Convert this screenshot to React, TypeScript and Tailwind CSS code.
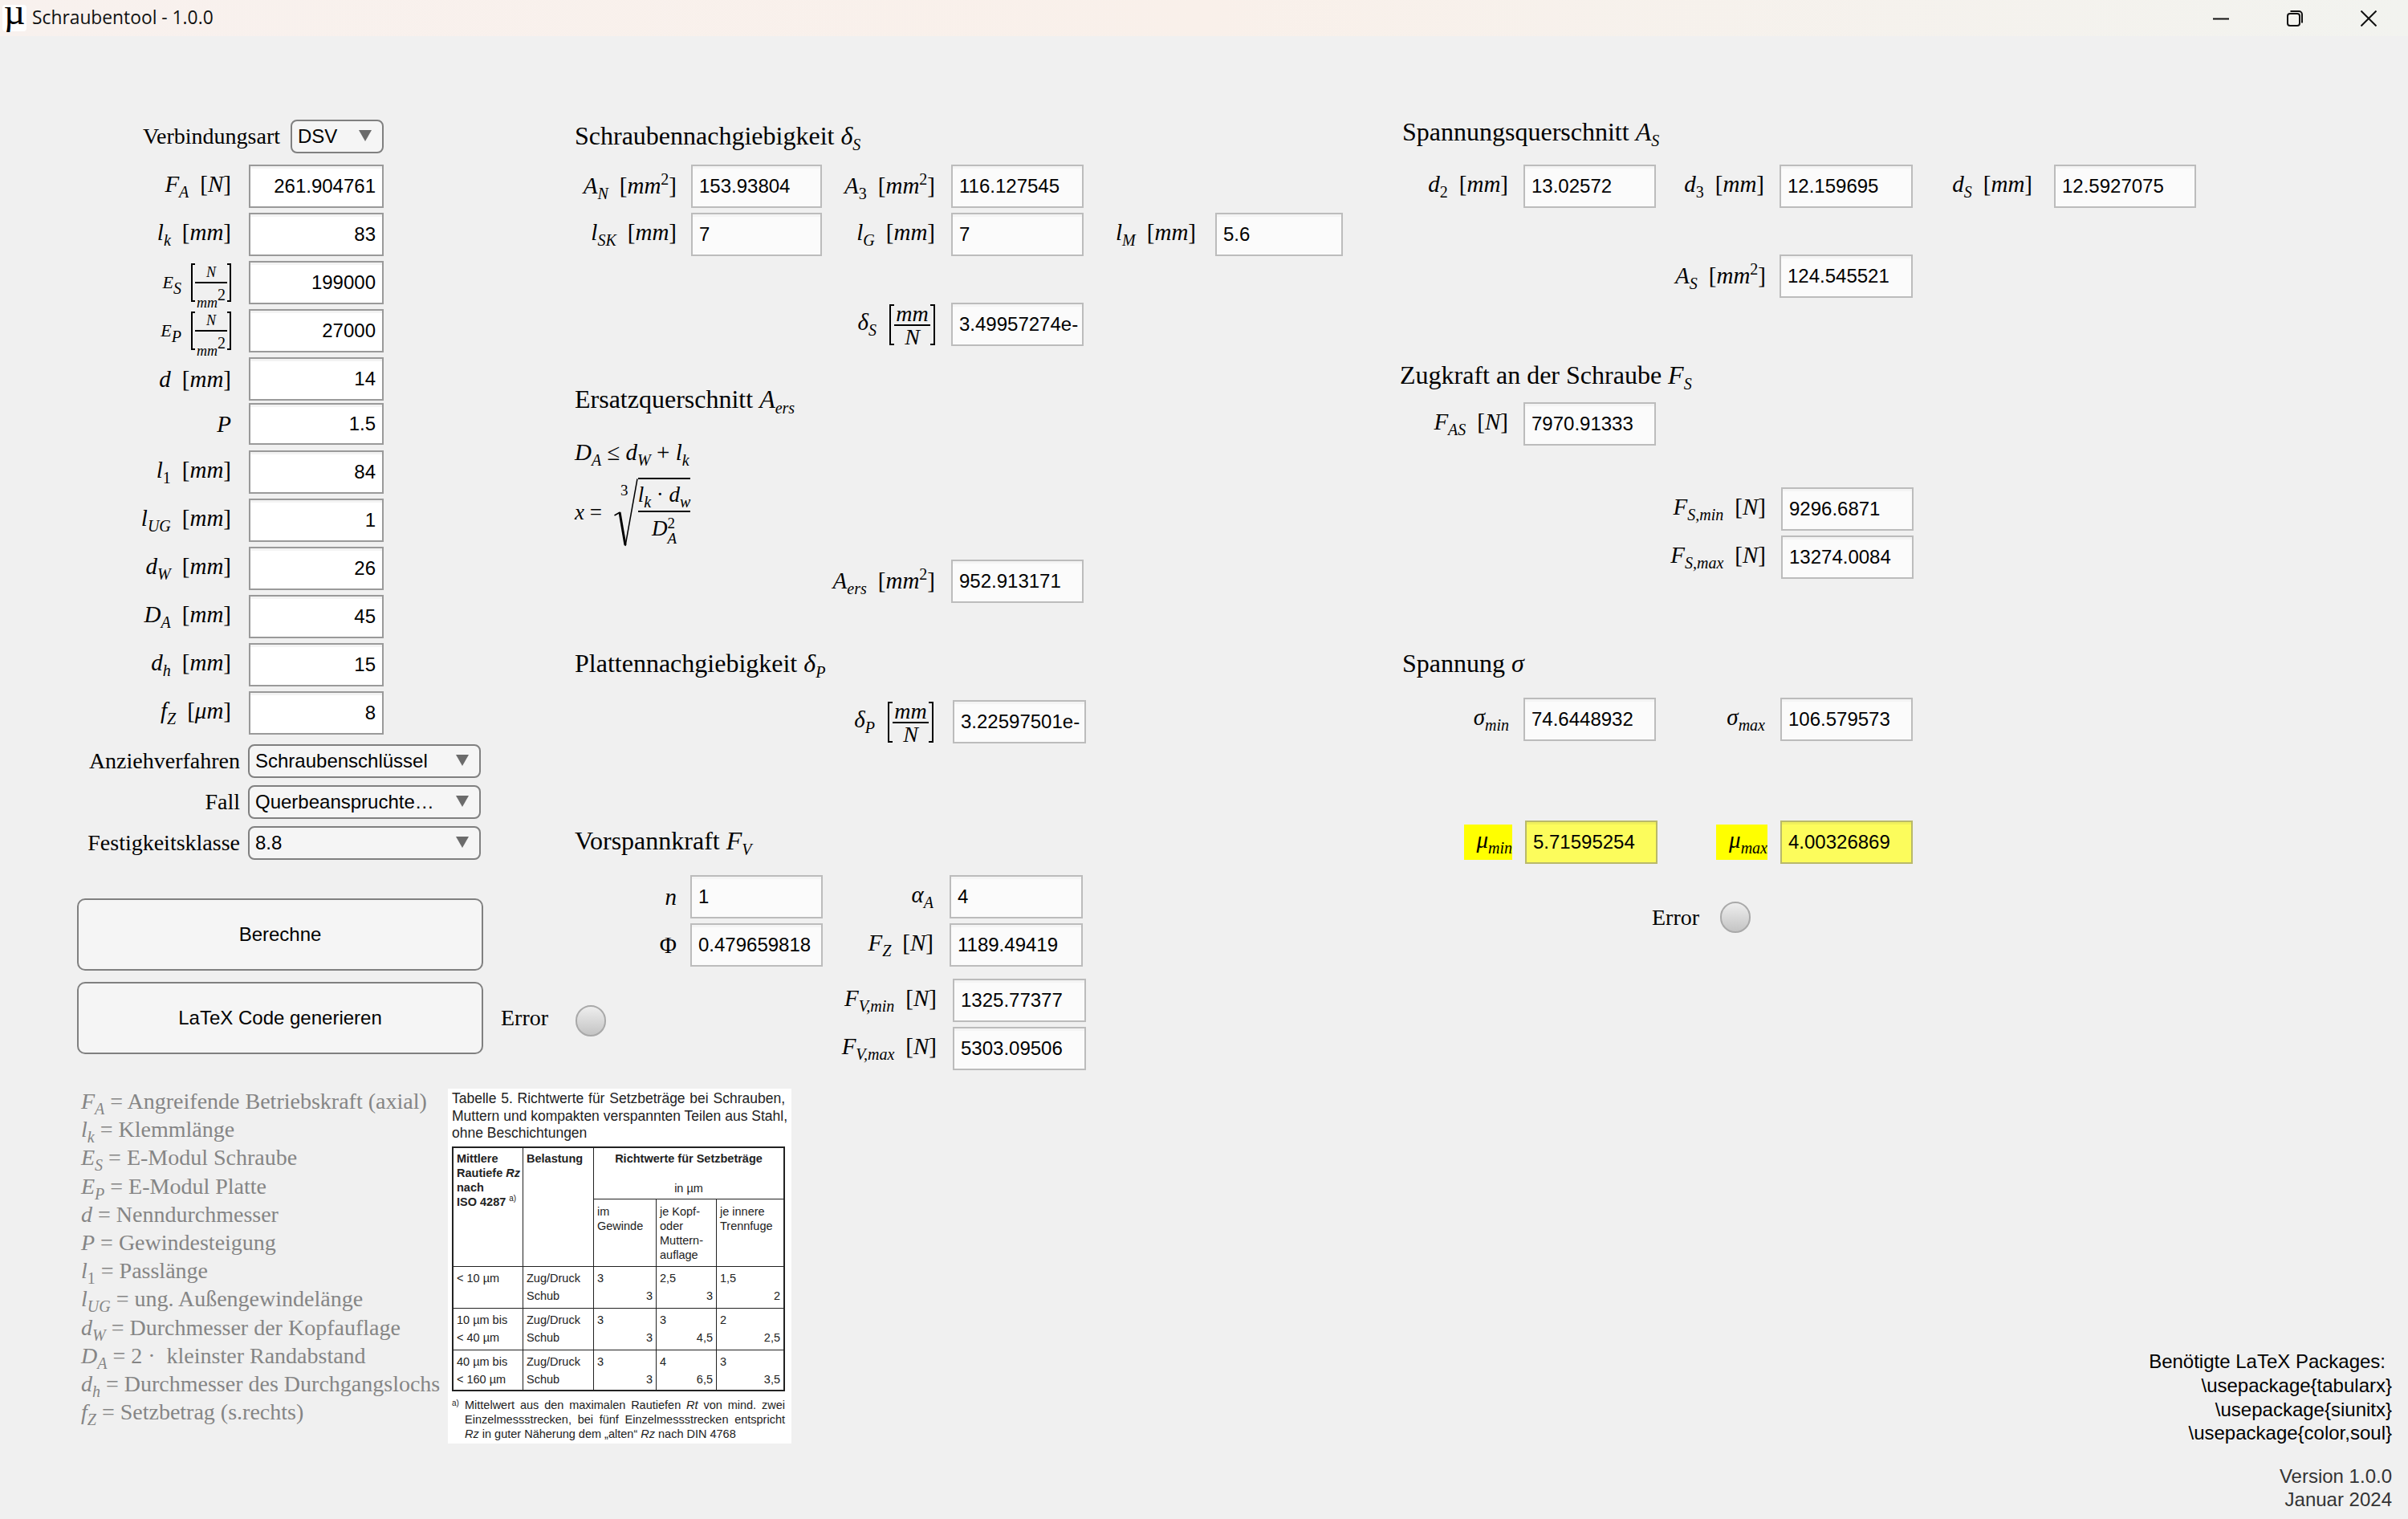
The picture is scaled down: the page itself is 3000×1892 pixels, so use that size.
import type { ReactNode } from "react"

function Sub({ children }: { children: ReactNode }) {
  return <span className="text-[20px] leading-none align-[-7px]">{children}</span>
}

function Sq() {
  return <span className="text-[20px] leading-none align-[11px] not-italic">2</span>
}

function Unit({ children }: { children: ReactNode }) {
  return (
    <span className="ml-[14px] not-italic">
      [<i>{children}</i>]
    </span>
  )
}

function Lab({ className, children }: { className: string; children: ReactNode }) {
  return (
    <div className={"flex items-center justify-end shrink-0 whitespace-pre italic leading-none text-[29px] " + className}>
      <span>{children}</span>
    </div>
  )
}

function Field({ className, value, right, short, tone = "out" }: { className: string; value: string; right?: boolean; short?: boolean; tone?: "in" | "out" | "yellow" }) {
  const look =
    tone === "in"
      ? "border-[#9a9a9a] bg-white shadow-[inset_0_3px_0_#f3f3f3]"
      : tone === "yellow"
        ? "border-[#b9b96a] bg-[#fcfc5c] shadow-[inset_0_3px_0_#f0f05c]"
        : "border-[#bcbcbc] bg-[#fbfbfb] shadow-[inset_0_3px_0_#f4f4f4]"
  return (
    <div className={"flex items-center shrink-0 border-2 overflow-hidden whitespace-nowrap font-['Liberation_Sans',sans-serif] text-[24px] " + (short ? "h-[52px] " : "h-[54px] ") + (right ? "justify-end pr-[8px] " : "pl-[8px] ") + look + " " + className}>
      {value}
    </div>
  )
}

function Select({ className, value }: { className: string; value: string }) {
  return (
    <div className={"flex items-center justify-between shrink-0 h-[42px] rounded-[8px] border-2 border-[#808080] bg-[#f5f5f5] pl-[7px] pr-[13px] font-['Liberation_Sans',sans-serif] text-[24px] " + className}>
      <span>{value}</span>
      <svg width="16" height="14" viewBox="0 0 16 14" className="shrink-0 mb-[3px]">
        <polygon points="0,0 16,0 8,14" fill="#6b6b6b" />
      </svg>
    </div>
  )
}

function Heading({ className = "", children }: { className?: string; children: ReactNode }) {
  return <div className={"h-[40px] leading-[40px] text-[32px] whitespace-pre " + className}>{children}</div>
}

// [ N / mm² ] unit used next to the moduli in the left column
function SmallFrac() {
  return (
    <span className="inline-flex items-stretch not-italic align-middle ml-[12px] h-[48px]">
      <span className="w-[5px] border-l-2 border-y-2 border-black" />
      <span className="flex flex-col items-center w-[40px] text-[18px] italic">
        <span className="h-[23px] leading-[23px]">N</span>
        <span className="w-full h-[2px] bg-black" />
        <span className="h-[23px] leading-[28px] whitespace-pre">mm<span className="not-italic text-[20px] align-[9px]">2</span></span>
      </span>
      <span className="w-[5px] border-r-2 border-y-2 border-black" />
    </span>
  )
}

function BigFrac() {
  return (
    <span className="inline-flex items-stretch not-italic align-middle ml-[16px] h-[51px]">
      <span className="w-[6px] border-l-2 border-y-2 border-black" />
      <span className="flex flex-col items-center w-[45px] italic text-[28px]">
        <span className="h-[25px] leading-[24px]">mm</span>
        <span className="w-full h-[2px] bg-black" />
        <span className="h-[24px] leading-[28px]">N</span>
      </span>
      <span className="w-[6px] border-r-2 border-y-2 border-black" />
    </span>
  )
}

function Lamp({ className = "" }: { className?: string }) {
  return <div className={"w-[38px] h-[39px] shrink-0 rounded-full border-2 border-[#a9a9a9] bg-gradient-to-b from-[#eeeeee] to-[#c4c4c4] " + className} />
}

function WideButton({ className = "", children }: { className?: string; children: ReactNode }) {
  return (
    <div className={"flex items-center justify-center shrink-0 w-[506px] h-[90px] rounded-[10px] border-2 border-[#808080] bg-[#f5f5f5] font-['Liberation_Sans',sans-serif] text-[24px] " + className}>
      {children}
    </div>
  )
}

function TitleBar() {
  return (
    <div className="flex items-center shrink-0 h-[45px] bg-gradient-to-r from-[#f8f1ee] via-[#f9f0ea] to-[#f2f3ef]">
      <div className="flex items-center justify-center w-[30px] h-[33px] ml-[3px] pb-[16px] rounded-[4px] bg-white font-['Liberation_Serif',serif] text-[46px] leading-none">
        µ
      </div>
      <span className="ml-[7px] font-['Open_Sans',sans-serif] text-[22.8px] text-[#111]">Schraubentool - 1.0.0</span>
      <div className="flex items-center ml-auto pr-[3px]">
        <div className="flex items-center justify-center w-[92px] h-[45px]">
          <svg width="20" height="20" viewBox="0 0 20 20" stroke="#111" strokeWidth="2" fill="none"><path d="M0 10.5h20" /></svg>
        </div>
        <div className="flex items-center justify-center w-[92px] h-[45px]">
          <svg width="20" height="20" viewBox="0 0 20 20" stroke="#111" strokeWidth="2" fill="none"><rect x="1" y="4" width="15" height="15" rx="3" /><path d="M4.5 1H15a4 4 0 0 1 4 4v10.5" /></svg>
        </div>
        <div className="flex items-center justify-center w-[92px] h-[45px]">
          <svg width="20" height="20" viewBox="0 0 20 20" stroke="#111" strokeWidth="2" fill="none"><path d="M0.5 0.5l19 19M19.5 0.5l-19 19" /></svg>
        </div>
      </div>
    </div>
  )
}

const leftRows: { label: ReactNode; value: string; short?: boolean; className?: string }[] = [
  { label: <>F<Sub>A</Sub><Unit>N</Unit></>, value: "261.904761" },
  { label: <>l<Sub>k</Sub><Unit>mm</Unit></>, value: "83" },
  { label: <><span className="text-[22px]">E<Sub>S</Sub></span><SmallFrac /></>, value: "199000" },
  { label: <><span className="text-[22px]">E<Sub>P</Sub></span><SmallFrac /></>, value: "27000" },
  { label: <>d<Unit>mm</Unit></>, value: "14" },
  { label: <>P</>, value: "1.5", short: true, className: "mt-[-3px]" },
  { label: <>l<span className="not-italic"><Sub>1</Sub></span><Unit>mm</Unit></>, value: "84", className: "mt-[1px]" },
  { label: <>l<Sub>UG</Sub><Unit>mm</Unit></>, value: "1" },
  { label: <>d<Sub>W</Sub><Unit>mm</Unit></>, value: "26" },
  { label: <>D<Sub>A</Sub><Unit>mm</Unit></>, value: "45" },
  { label: <>d<Sub>h</Sub><Unit>mm</Unit></>, value: "15" },
  { label: <>f<Sub>Z</Sub><Unit>μm</Unit></>, value: "8" },
]

const legend: ReactNode[] = [
  <><i>F<Sub>A</Sub></i> = Angreifende Betriebskraft (axial)</>,
  <><i>l<Sub>k</Sub></i> = Klemmlänge</>,
  <><i>E<Sub>S</Sub></i> = E-Modul Schraube</>,
  <><i>E<Sub>P</Sub></i> = E-Modul Platte</>,
  <><i>d</i> = Nenndurchmesser</>,
  <><i>P</i> = Gewindesteigung</>,
  <><i>l</i><Sub>1</Sub> = Passlänge</>,
  <><i>l<Sub>UG</Sub></i> = ung. Außengewindelänge</>,
  <><i>d<Sub>W</Sub></i> = Durchmesser der Kopfauflage</>,
  <><i>D<Sub>A</Sub></i> = 2 ·  kleinster Randabstand</>,
  <><i>d<Sub>h</Sub></i> = Durchmesser des Durchgangslochs</>,
  <><i>f<Sub>Z</Sub></i> = Setzbetrag (s.rechts)</>,
]

const tableRows = [
  { a: ["< 10 µm", ""], c: ["3", "3"], d: ["2,5", "3"], e: ["1,5", "2"] },
  { a: ["10 µm bis", "< 40 µm"], c: ["3", "3"], d: ["3", "4,5"], e: ["2", "2,5"] },
  { a: ["40 µm bis", "< 160 µm"], c: ["3", "3"], d: ["4", "6,5"], e: ["3", "3,5"] },
]

function SplitCell({ v, last }: { v: string[]; last?: boolean }) {
  return (
    <div className={"flex flex-col h-full px-[4px] pt-[3px] leading-[22px] border-[#222] " + (last ? "" : "border-r-[1.5px]")}>
      <span>{v[0]}</span>
      <span className="text-right">{v[1]}</span>
    </div>
  )
}

function SetzTable() {
  return (
    <div className="shrink-0 flex flex-col w-[428px] h-[442px] bg-white pl-[5px] pr-[8px] pt-[2px] font-['Liberation_Sans',sans-serif] text-[#222]">
      <div className="text-[17.5px] leading-[21.5px]">
        <div className="whitespace-nowrap text-justify [text-align-last:justify]">Tabelle 5. Richtwerte für Setzbeträge bei Schrauben,</div>
        <div className="whitespace-nowrap text-justify [text-align-last:justify]">Muttern und kompakten verspannten Teilen aus Stahl,</div>
        <div>ohne Beschichtungen</div>
      </div>
      <div className="mt-[5px] h-[305px] w-[415px] grid grid-cols-[87px_88px_78px_75px_83px] grid-rows-[64px_84px_52px_52px_49px] border-2 border-[#222] text-[14.5px]">
        <div className="row-span-2 pl-[4px] pt-[4px] leading-[18.3px] font-bold whitespace-nowrap border-r-[1.5px] border-b-[1.5px] border-[#222]">
          Mittlere<br />Rautiefe <i>Rz</i><br />nach<br />ISO 4287 <span className="font-normal text-[10px] leading-none align-[6px]">a)</span>
        </div>
        <div className="row-span-2 px-[4px] pt-[4px] leading-[18.3px] font-bold border-r-[1.5px] border-b-[1.5px] border-[#222]">Belastung</div>
        <div className="col-span-3 flex flex-col items-center pt-[4px] leading-[18.3px] border-b-[1.5px] border-[#222]">
          <span className="font-bold">Richtwerte für Setzbeträge</span>
          <span className="mt-[19px]">in µm</span>
        </div>
        <div className="px-[4px] pt-[6px] leading-[18.3px] border-r-[1.5px] border-b-[1.5px] border-[#222]">im<br />Gewinde</div>
        <div className="px-[4px] pt-[6px] leading-[18.3px] border-r-[1.5px] border-b-[1.5px] border-[#222]">je Kopf-<br />oder<br />Muttern-<br />auflage</div>
        <div className="px-[4px] pt-[6px] leading-[18.3px] border-b-[1.5px] border-[#222]">je innere<br />Trennfuge</div>
        {tableRows.map((r, i) => (
          <div key={i} className="contents">
            <div className={"px-[4px] pt-[3px] leading-[22px] border-r-[1.5px] border-[#222] " + (i < 2 ? "border-b-[1.5px]" : "")}>{r.a[0]}<br />{r.a[1]}</div>
            <div className={"px-[4px] pt-[3px] leading-[22px] border-r-[1.5px] border-[#222] " + (i < 2 ? "border-b-[1.5px]" : "")}>Zug/Druck<br />Schub</div>
            <div className={i < 2 ? "border-b-[1.5px] border-[#222]" : ""}><SplitCell v={r.c} /></div>
            <div className={i < 2 ? "border-b-[1.5px] border-[#222]" : ""}><SplitCell v={r.d} /></div>
            <div className={i < 2 ? "border-b-[1.5px] border-[#222]" : ""}><SplitCell v={r.e} last /></div>
          </div>
        ))}
      </div>
      <div className="mt-[8px] w-[415px] flex text-[14.5px] leading-[18.3px]">
        <span className="w-[16px] shrink-0 text-[10px] leading-[14px]">a)</span>
        <div className="flex-1">
          <div className="whitespace-nowrap text-justify [text-align-last:justify]">Mittelwert aus den maximalen Rautiefen <i>Rt</i> von mind. zwei</div>
          <div className="whitespace-nowrap text-justify [text-align-last:justify]">Einzelmessstrecken, bei fünf Einzelmessstrecken entspricht</div>
          <div><i>Rz</i> in guter Näherung dem „alten“ <i>Rz</i> nach DIN 4768</div>
        </div>
      </div>
    </div>
  )
}

function LeftColumn() {
  return (
    <div className="flex flex-col w-[716px] shrink-0 pt-[104px]">
      <div className="flex items-center w-[478px] text-[28px] leading-none">
        <span className="w-[349px] text-right">Verbindungsart</span>
        <Select className="ml-[13px] w-[116px]" value="DSV" />
      </div>
      <div className="flex flex-col gap-[6px] mt-[14px]">
        {leftRows.map((r, i) => (
          <div key={i} className={"flex items-center " + (r.className ?? "")}>
            <Lab className="w-[288px]">{r.label}</Lab>
            <Field className="ml-[22px] w-[168px]" value={r.value} right short={r.short} tone="in" />
          </div>
        ))}
      </div>
      <div className="flex flex-col gap-[9px] mt-[12px] text-[28px] leading-none">
        {[["Anziehverfahren", "Schraubenschlüssel"], ["Fall", "Querbeanspruchte…"], ["Festigkeitsklasse", "8.8"]].map(([l, v]) => (
          <div key={l} className="flex items-center">
            <span className="w-[299px] text-right">{l}</span>
            <Select className="ml-[10px] w-[290px]" value={v} />
          </div>
        ))}
      </div>
      <WideButton className="ml-[96px] mt-[48px]">Berechne</WideButton>
      <div className="flex items-center mt-[14px] ml-[96px]">
        <WideButton>LaTeX Code generieren</WideButton>
        <span className="ml-[22px] text-[28px] w-[93px] shrink-0">Error</span>
        <Lamp className="mt-[6px]" />
      </div>
      <div className="flex mt-[43px]">
        <div className="w-[558px] shrink-0 mt-[-2px] pl-[101px] text-[28px] leading-[35.2px] text-[#858585] whitespace-pre">
          {legend.map((l, i) => <div key={i} className="h-[35.2px]">{l}</div>)}
        </div>
        <SetzTable />
      </div>
    </div>
  )
}

function MiddleColumn() {
  return (
    <div className="flex flex-col w-[1028px] shrink-0">
      <Heading className="mt-[104px]">Schraubennachgiebigkeit <i>δ<Sub>S</Sub></i></Heading>
      <div className="flex mt-[16px]">
        <Lab className="w-[127px]">A<Sub>N</Sub><Unit>mm<Sq /></Unit></Lab>
        <Field className="ml-[18px] w-[163px]" value="153.93804" />
        <Lab className="w-[141px]">A<span className="not-italic"><Sub>3</Sub></span><Unit>mm<Sq /></Unit></Lab>
        <Field className="ml-[20px] w-[165px]" value="116.127545" />
      </div>
      <div className="flex mt-[6px]">
        <Lab className="w-[127px]">l<Sub>SK</Sub><Unit>mm</Unit></Lab>
        <Field className="ml-[18px] w-[163px]" value="7" />
        <Lab className="w-[141px]">l<Sub>G</Sub><Unit>mm</Unit></Lab>
        <Field className="ml-[20px] w-[165px]" value="7" />
        <Lab className="w-[140px]">l<Sub>M</Sub><Unit>mm</Unit></Lab>
        <Field className="ml-[24px] w-[159px]" value="5.6" />
      </div>
      <div className="flex mt-[58px]">
        <Lab className="w-[449px]">δ<Sub>S</Sub><BigFrac /></Lab>
        <Field className="ml-[20px] w-[165px]" value="3.49957274e-" />
      </div>
      <Heading className="mt-[46px]">Ersatzquerschnitt <i>A<Sub>ers</Sub></i></Heading>
      <div className="h-[40px] mt-[26px] leading-[40px] text-[29px] italic whitespace-pre">
        D<Sub>A</Sub> <span className="not-italic">≤</span> d<Sub>W</Sub> <span className="not-italic">+</span> l<Sub>k</Sub>
      </div>
      <div className="flex items-center h-[86px] mt-[12px] text-[27px]">
        <span className="w-[49px] whitespace-pre"><i>x</i> =</span>
        <div className="relative flex items-stretch h-full">
          <svg width="30" height="86" viewBox="0 0 30 86" fill="none" stroke="#000">
            <path d="M0.5 47l7-4" strokeWidth="1.5" />
            <path d="M7 43l7 41" strokeWidth="3" />
            <path d="M14 85L29 1.5" strokeWidth="1.5" />
          </svg>
          <span className="absolute left-[8px] top-[6px] text-[19px] leading-none">3</span>
          <div className="flex flex-col items-center w-[65px] border-t-2 border-black italic">
            <div className="h-[39px] leading-[38px] whitespace-pre">l<Sub>k</Sub><span className="not-italic"> · </span>d<Sub>w</Sub></div>
            <div className="w-full h-[2px] bg-black" />
            <div className="leading-[40px]">D<span className="inline-flex flex-col text-[19px] leading-[19px] align-middle"><span className="not-italic">2</span><span>A</span></span></div>
          </div>
        </div>
      </div>
      <div className="flex mt-[16px]">
        <Lab className="w-[449px]">A<Sub>ers</Sub><Unit>mm<Sq /></Unit></Lab>
        <Field className="ml-[20px] w-[165px]" value="952.913171" />
      </div>
      <Heading className="mt-[55px]">Plattennachgiebigkeit <i>δ<Sub>P</Sub></i></Heading>
      <div className="flex mt-[26px]">
        <Lab className="w-[447px]">δ<Sub>P</Sub><BigFrac /></Lab>
        <Field className="ml-[24px] w-[166px]" value="3.22597501e-" />
      </div>
      <Heading className="mt-[101px]">Vorspannkraft <i>F<Sub>V</Sub></i></Heading>
      <div className="flex mt-[23px]">
        <Lab className="w-[127px]">n</Lab>
        <Field className="ml-[17px] w-[165px]" value="1" />
        <Lab className="w-[138px]">α<Sub>A</Sub></Lab>
        <Field className="ml-[20px] w-[166px]" value="4" />
      </div>
      <div className="flex mt-[6px]">
        <Lab className="w-[127px] not-italic">Φ</Lab>
        <Field className="ml-[17px] w-[165px]" value="0.479659818" />
        <Lab className="w-[138px]">F<Sub>Z</Sub><Unit>N</Unit></Lab>
        <Field className="ml-[20px] w-[166px]" value="1189.49419" />
      </div>
      <div className="flex mt-[15px]">
        <Lab className="w-[451px]">F<Sub>V,min</Sub><Unit>N</Unit></Lab>
        <Field className="ml-[20px] w-[166px]" value="1325.77377" />
      </div>
      <div className="flex mt-[6px]">
        <Lab className="w-[451px]">F<Sub>V,max</Sub><Unit>N</Unit></Lab>
        <Field className="ml-[20px] w-[166px]" value="5303.09506" />
      </div>
    </div>
  )
}

function RightColumn() {
  return (
    <div className="flex flex-col flex-1">
      <Heading className="mt-[99px] ml-[3px]">Spannungsquerschnitt <i>A<Sub>S</Sub></i></Heading>
      <div className="flex mt-[21px]">
        <Lab className="w-[135px]">d<span className="not-italic"><Sub>2</Sub></span><Unit>mm</Unit></Lab>
        <Field className="ml-[19px] w-[165px]" value="13.02572" />
        <Lab className="w-[135px]">d<span className="not-italic"><Sub>3</Sub></span><Unit>mm</Unit></Lab>
        <Field className="ml-[19px] w-[166px]" value="12.159695" />
        <Lab className="w-[149px]">d<Sub>S</Sub><Unit>mm</Unit></Lab>
        <Field className="ml-[27px] w-[177px]" value="12.5927075" />
      </div>
      <div className="flex mt-[58px]">
        <Lab className="w-[456px]">A<Sub>S</Sub><Unit>mm<Sq /></Unit></Lab>
        <Field className="ml-[17px] w-[166px]" value="124.545521" />
      </div>
      <Heading className="mt-[76px]">Zugkraft an der Schraube <i>F<Sub>S</Sub></i></Heading>
      <div className="flex mt-[14px]">
        <Lab className="w-[135px]">F<Sub>AS</Sub><Unit>N</Unit></Lab>
        <Field className="ml-[19px] w-[165px]" value="7970.91333" />
      </div>
      <div className="flex mt-[52px]">
        <Lab className="w-[456px]">F<Sub>S,min</Sub><Unit>N</Unit></Lab>
        <Field className="ml-[19px] w-[165px]" value="9296.6871" />
      </div>
      <div className="flex mt-[6px]">
        <Lab className="w-[456px]">F<Sub>S,max</Sub><Unit>N</Unit></Lab>
        <Field className="ml-[19px] w-[165px]" value="13274.0084" />
      </div>
      <Heading className="mt-[85px] ml-[3px]">Spannung <i>σ</i></Heading>
      <div className="flex mt-[23px]">
        <Lab className="w-[136px]">σ<Sub>min</Sub></Lab>
        <Field className="ml-[18px] w-[165px]" value="74.6448932" />
        <Lab className="w-[136px]">σ<Sub>max</Sub></Lab>
        <Field className="ml-[19px] w-[165px]" value="106.579573" />
      </div>
      <div className="flex items-center mt-[99px]">
        <div className="flex items-center justify-end shrink-0 ml-[80px] w-[60px] h-[44px] bg-[#ffff00] italic text-[29px] leading-none whitespace-pre"><span>μ<Sub>min</Sub></span></div>
        <Field className="ml-[16px] w-[165px]" value="5.71595254" tone="yellow" />
        <div className="flex items-center justify-end shrink-0 ml-[73px] w-[64px] h-[44px] bg-[#ffff00] italic text-[29px] leading-none whitespace-pre"><span>μ<Sub>max</Sub></span></div>
        <Field className="ml-[16px] w-[165px]" value="4.00326869" tone="yellow" />
      </div>
      <div className="flex items-center mt-[47px] ml-[314px]">
        <span className="w-[85px] text-[28px] leading-none">Error</span>
        <Lamp />
      </div>
      <div className="mt-auto self-end pr-[20px] pb-[9px] text-right font-['Liberation_Sans',sans-serif] text-[24px] leading-[29.6px] whitespace-pre">
        <div className="pr-[8px]">Benötigte LaTeX Packages:</div>
        <div>\usepackage{"{tabularx}"}</div>
        <div>\usepackage{"{siunitx}"}</div>
        <div>\usepackage{"{color,soul}"}</div>
        <div className="text-[#333] mt-[24px]">Version 1.0.0</div>
        <div className="text-[#333]">Januar 2024</div>
      </div>
    </div>
  )
}

export default function App() {
  return (
    <div className="flex flex-col w-[3000px] h-[1892px] overflow-hidden bg-[#f0f0f0] text-black font-['Liberation_Serif',serif]">
      <TitleBar />
      <div className="flex flex-1">
        <LeftColumn />
        <MiddleColumn />
        <RightColumn />
      </div>
    </div>
  )
}
